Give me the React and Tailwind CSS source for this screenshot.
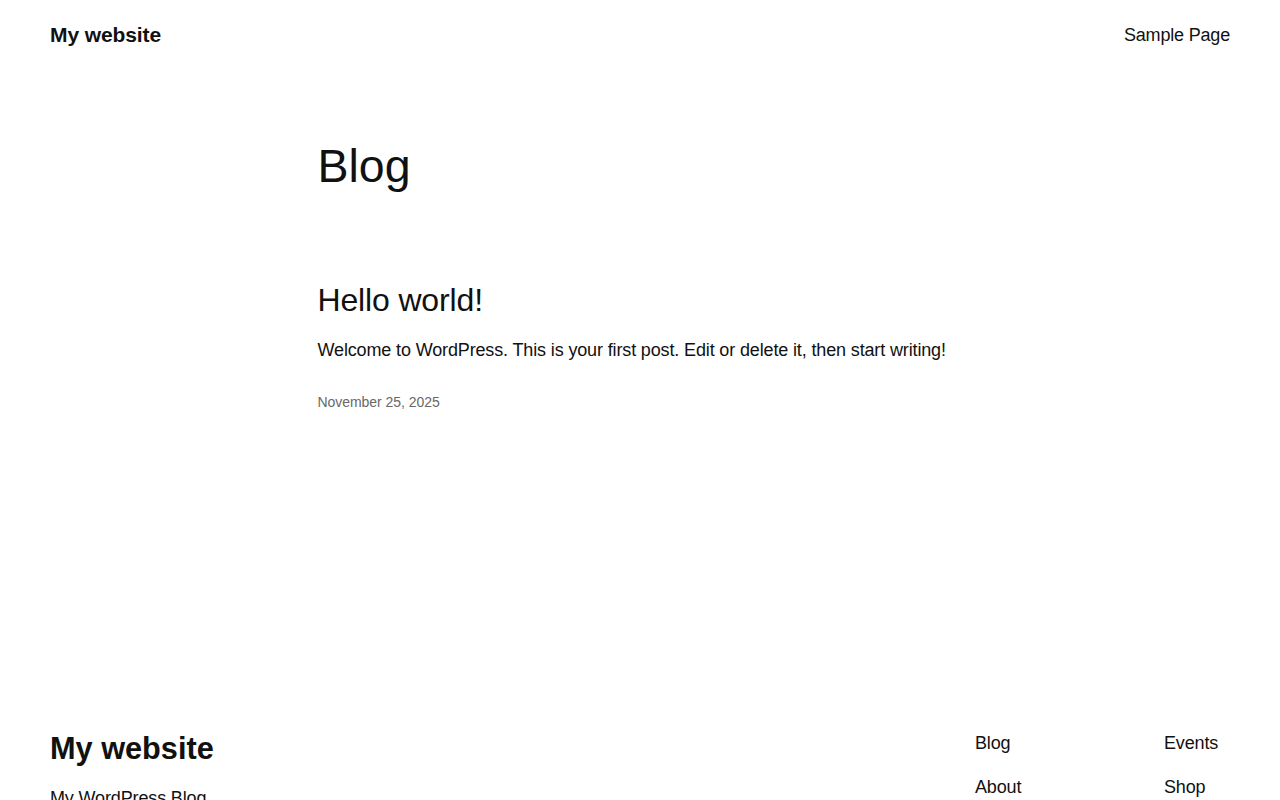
export default function App() {
  return (
    <div className="h-[800px] overflow-hidden bg-white text-[#111111] flex flex-col" style={{ fontFamily: '"Liberation Sans", Arial, sans-serif' }}>
      <header className="h-[70px] shrink-0 px-[50px] flex items-center justify-between">
        <a className="text-[21px] font-bold tracking-[-0.1px]">My website</a>
        <nav className="text-[18px] tracking-[-0.18px]">
          <a>Sample Page</a>
        </nav>
      </header>
      <main className="w-[645px] mx-auto">
        <h1 className="mt-[69px] text-[46.5px] leading-[1.2]">Blog</h1>
        <article className="mt-[86px]">
          <h2 className="text-[32px] leading-[1.2] tracking-[-0.15px]">Hello world!</h2>
          <p className="mt-[17px] text-[18px] leading-[1.6] tracking-[-0.14px]">Welcome to WordPress. This is your first post. Edit or delete it, then start writing!</p>
          <div className="mt-[27px] text-[14px] text-[#686868] tracking-[-0.05px]">November 25, 2025</div>
        </article>
      </main>
      <footer className="mt-[318px] shrink-0 px-[50px] flex justify-between items-start">
        <div>
          <div className="text-[30.7px] font-bold leading-[1.2]">My website</div>
          <div className="mt-[17px] text-[18px] tracking-[-0.14px]">My WordPress Blog</div>
        </div>
        <div className="-mt-px flex text-[18px] tracking-[-0.14px]">
          <div className="w-[189px] flex flex-col gap-[17px]">
            <a>Blog</a>
            <a>About</a>
          </div>
          <div className="w-[66px] flex flex-col gap-[17px]">
            <a>Events</a>
            <a>Shop</a>
          </div>
        </div>
      </footer>
    </div>
  );
}
